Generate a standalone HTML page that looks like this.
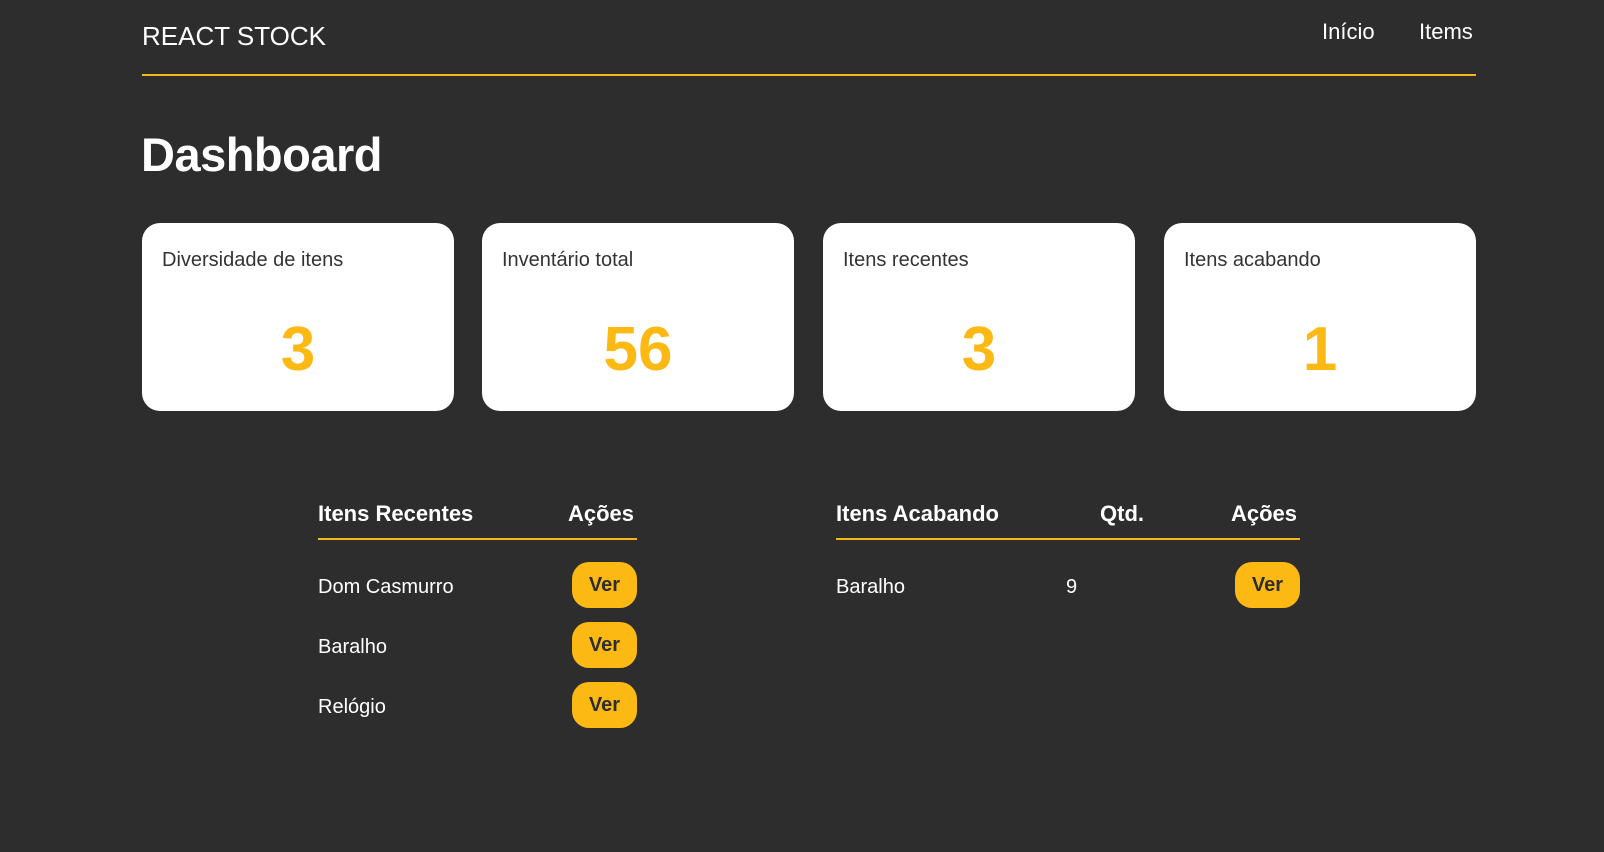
<!DOCTYPE html>
<html><head><meta charset="utf-8"><style>
*{margin:0;padding:0;box-sizing:border-box}
body{width:1604px;height:852px;background:#2d2d2d;font-family:"Liberation Sans",sans-serif;color:#fff;position:relative;overflow:hidden}
.a{position:absolute}
.logo{left:142px;top:21px;font-size:26px}
.nav{top:19px;font-size:22px}
.hr{left:142px;top:74px;width:1334px;height:2px;background:#f5b617}
h1{position:absolute;left:141px;top:127px;font-size:47px;font-weight:bold;letter-spacing:-0.5px}
.card{position:absolute;top:223px;width:312px;height:188px;background:#fff;border-radius:18px}
.card .l{position:absolute;left:20px;top:26px;font-size:20px;color:#333}
.card .n{position:absolute;left:0;right:0;top:91px;text-align:center;font-size:62px;font-weight:bold;color:#fdb913}
.th{font-size:22px;font-weight:bold;top:501px}
.line{height:2px;background:#f5b617;top:538px}
.td{font-size:20px}
.btn{position:absolute;width:65px;height:46px;border-radius:17px;background:#fdb913;color:#2d2d2d;font-weight:bold;font-size:20px;text-align:center;line-height:46px}
</style></head><body>
<div class="a logo">REACT STOCK</div>
<div class="a nav" style="left:1322px">Início</div>
<div class="a nav" style="left:1419px">Items</div>
<div class="a hr"></div>
<h1>Dashboard</h1>
<div class="card" style="left:142px"><div class="l">Diversidade de itens</div><div class="n">3</div></div>
<div class="card" style="left:482px"><div class="l">Inventário total</div><div class="n">56</div></div>
<div class="card" style="left:823px"><div class="l">Itens recentes</div><div class="n">3</div></div>
<div class="card" style="left:1164px"><div class="l">Itens acabando</div><div class="n">1</div></div>

<div class="a th" style="left:318px">Itens Recentes</div>
<div class="a th" style="left:568px">Ações</div>
<div class="a line" style="left:318px;width:319px"></div>
<div class="a td" style="left:318px;top:576px">Dom Casmurro</div>
<div class="a td" style="left:318px;top:636px">Baralho</div>
<div class="a td" style="left:318px;top:696px">Relógio</div>
<div class="btn" style="left:572px;top:562px">Ver</div>
<div class="btn" style="left:572px;top:622px">Ver</div>
<div class="btn" style="left:572px;top:682px">Ver</div>

<div class="a th" style="left:836px">Itens Acabando</div>
<div class="a th" style="left:1100px">Qtd.</div>
<div class="a th" style="left:1231px">Ações</div>
<div class="a line" style="left:836px;width:464px"></div>
<div class="a td" style="left:836px;top:576px">Baralho</div>
<div class="a td" style="left:1066px;top:576px">9</div>
<div class="btn" style="left:1235px;top:562px">Ver</div>
</body></html>
